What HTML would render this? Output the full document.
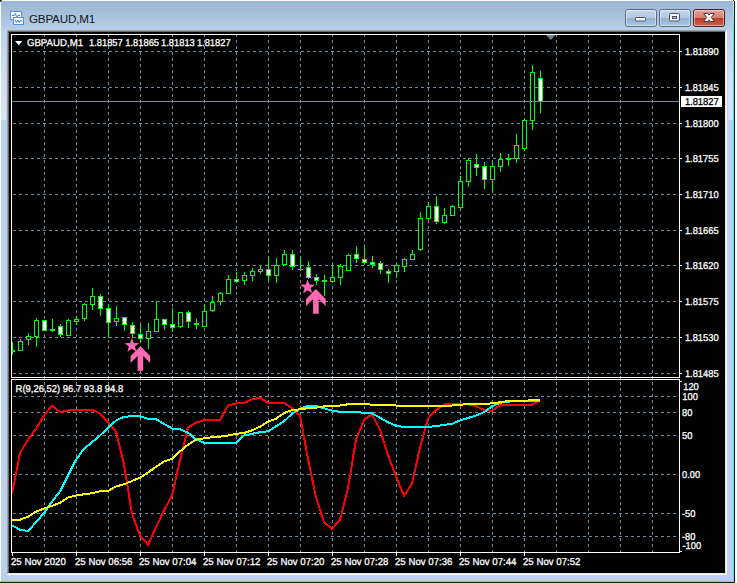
<!DOCTYPE html>
<html><head><meta charset="utf-8"><title>GBPAUD,M1</title>
<style>html,body{margin:0;padding:0;background:#fff;}body{width:737px;height:583px;overflow:hidden;}svg{display:block;}text{font-family:"Liberation Sans",Arial,sans-serif;}</style>
</head><body>
<svg width="737" height="583" viewBox="0 0 737 583">
<defs>
<linearGradient id="tb" x1="0" y1="0" x2="0" y2="1"><stop offset="0" stop-color="#99b4d1"/><stop offset="1" stop-color="#b9d1ea"/></linearGradient>
<linearGradient id="sideL" x1="0" y1="0" x2="0" y2="1"><stop offset="0" stop-color="#b9d1ea"/><stop offset="0.1" stop-color="#cfe0f2"/><stop offset="0.99" stop-color="#d3e3f4"/><stop offset="1" stop-color="#b9d1ea"/></linearGradient>
<linearGradient id="btn" x1="0" y1="0" x2="0" y2="1"><stop offset="0" stop-color="#c4d7ec"/><stop offset="0.48" stop-color="#b1c9e3"/><stop offset="0.5" stop-color="#94b0d1"/><stop offset="1" stop-color="#acc5e1"/></linearGradient>
<linearGradient id="cls" x1="0" y1="0" x2="0" y2="1"><stop offset="0" stop-color="#e6a598"/><stop offset="0.48" stop-color="#d67f6e"/><stop offset="0.5" stop-color="#b93a25"/><stop offset="1" stop-color="#cc6650"/></linearGradient>
<linearGradient id="strip" x1="0" y1="0" x2="0" y2="1"><stop offset="0" stop-color="#bdd4eb"/><stop offset="0.5" stop-color="#cfdff1"/><stop offset="1" stop-color="#d8e5f4"/></linearGradient>
<linearGradient id="cy" x1="0" y1="0" x2="0" y2="1"><stop offset="0" stop-color="#d0f2ff"/><stop offset="1" stop-color="#46dcff"/></linearGradient>
<clipPath id="cm"><rect x="12" y="35" width="667" height="342"/></clipPath>
<clipPath id="cs"><rect x="12" y="380" width="667" height="172"/></clipPath>
</defs>
<rect x="0" y="0" width="737" height="583" fill="#fff"/>
<g shape-rendering="crispEdges">
<rect x="0" y="0" width="735" height="583" fill="#b9d1ea"/>
<rect x="0" y="0" width="735" height="31" fill="url(#tb)"/>
<rect x="1" y="30" width="5" height="90" fill="url(#strip)"/>
<rect x="728" y="30" width="5" height="90" fill="url(#strip)"/>
<rect x="0" y="0" width="735" height="1" fill="#fff"/>
<rect x="0" y="0" width="1" height="581" fill="#fff"/>
<rect x="733" y="1" width="1" height="581" fill="#46dcff"/>
<rect x="733" y="1" width="1" height="30" fill="url(#cy)"/>
<rect x="0" y="581" width="734" height="1" fill="#46dcff"/>
<rect x="734" y="0" width="1" height="583" fill="#1c1c1c"/>
<rect x="0" y="582" width="735" height="1" fill="#1c1c1c"/>
<rect x="0" y="0" width="2" height="1" fill="#333"/><rect x="0" y="1" width="1" height="1" fill="#333"/>
<rect x="733" y="0" width="2" height="1" fill="#333"/><rect x="734" y="0" width="3" height="1" fill="#fff"/><rect x="735" y="0" width="2" height="583" fill="#fff"/>
<rect x="7" y="30" width="720" height="545" fill="#fff"/>
<rect x="7" y="30" width="719" height="544" fill="#a0a0a0"/>
<rect x="8" y="31" width="718" height="543" fill="#e3e3e3"/>
<rect x="8" y="31" width="717" height="542" fill="#696969"/>
<rect x="9" y="32" width="716" height="541" fill="#000"/>
</g>
<g shape-rendering="crispEdges">
<rect x="10" y="11" width="12" height="9" fill="#5b8cf0"/><rect x="11" y="12" width="10" height="7" fill="#fff"/>
<rect x="13" y="17" width="11" height="8" fill="#5b8cf0"/><rect x="14" y="18" width="9" height="6" fill="#fff"/>
</g>
<path d="M12 15.5h2.2l1-1.8 1.8 3.2 1-1.4h2" fill="none" stroke="#3f74ec" stroke-width="1"/>
<path d="M15 20l1.4 2.6 1.4-2.6 1.4 2.6 1.4-2.6 1 1.6" fill="none" stroke="#3f74ec" stroke-width="1"/>
<text x="28.9" y="22.6" font-size="11.7px" fill="#161616" letter-spacing="-0.2">GBPAUD,M1</text>
<rect x="625.5" y="9.5" width="31" height="17" rx="2.2" ry="2.2" fill="url(#btn)" stroke="#5a6b85" stroke-width="1"/>
<rect x="626.5" y="10.5" width="29" height="15" rx="1.5" ry="1.5" fill="none" stroke="#fff" stroke-opacity="0.45" stroke-width="1"/>
<rect x="659.5" y="9.5" width="31" height="17" rx="2.2" ry="2.2" fill="url(#btn)" stroke="#5a6b85" stroke-width="1"/>
<rect x="660.5" y="10.5" width="29" height="15" rx="1.5" ry="1.5" fill="none" stroke="#fff" stroke-opacity="0.45" stroke-width="1"/>
<rect x="693.5" y="9.5" width="31" height="17" rx="2.2" ry="2.2" fill="url(#cls)" stroke="#4a1c24" stroke-width="1"/>
<rect x="694.5" y="10.5" width="29" height="15" rx="1.5" ry="1.5" fill="none" stroke="#fff" stroke-opacity="0.45" stroke-width="1"/>
<rect x="635.5" y="17.5" width="10" height="3.5" rx="0.8" fill="#f4f6fa" stroke="#4b5468" stroke-width="1"/>
<rect x="669.5" y="13.5" width="10" height="7.5" rx="0.8" fill="#f4f6fa" stroke="#4b5468" stroke-width="1"/>
<rect x="672.5" y="16.5" width="4" height="2" fill="#9fb7d3" stroke="#4b5468" stroke-width="1"/>
<path d="M703.7 13.5 L707.9 13.5 L709 15.1 L710.1 13.5 L714.3 13.5 L711.3 17.4 L714.5 21.5 L710.2 21.5 L709 19.8 L707.8 21.5 L703.5 21.5 L706.7 17.4 Z" fill="#f6f6f6" stroke="#4a3b48" stroke-width="1" stroke-linejoin="round"/>
<g shape-rendering="crispEdges" stroke="#778899" stroke-width="1" stroke-dasharray="3 3" fill="none">
<line x1="13" y1="51.5" x2="679" y2="51.5"/>
<line x1="13" y1="87.5" x2="679" y2="87.5"/>
<line x1="13" y1="123.5" x2="679" y2="123.5"/>
<line x1="13" y1="158.5" x2="679" y2="158.5"/>
<line x1="13" y1="194.5" x2="679" y2="194.5"/>
<line x1="13" y1="230.5" x2="679" y2="230.5"/>
<line x1="13" y1="265.5" x2="679" y2="265.5"/>
<line x1="13" y1="301.5" x2="679" y2="301.5"/>
<line x1="13" y1="337.5" x2="679" y2="337.5"/>
<line x1="13" y1="373.5" x2="679" y2="373.5"/>
<line x1="13" y1="396.5" x2="679" y2="396.5"/>
<line x1="13" y1="412.5" x2="679" y2="412.5"/>
<line x1="13" y1="435.5" x2="679" y2="435.5"/>
<line x1="13" y1="474.5" x2="679" y2="474.5"/>
<line x1="13" y1="513.5" x2="679" y2="513.5"/>
<line x1="13" y1="536.5" x2="679" y2="536.5"/>
<line x1="44.5" y1="34" x2="44.5" y2="552"/>
<line x1="76.5" y1="34" x2="76.5" y2="552"/>
<line x1="108.5" y1="34" x2="108.5" y2="552"/>
<line x1="140.5" y1="34" x2="140.5" y2="552"/>
<line x1="172.5" y1="34" x2="172.5" y2="552"/>
<line x1="204.5" y1="34" x2="204.5" y2="552"/>
<line x1="236.5" y1="34" x2="236.5" y2="552"/>
<line x1="268.5" y1="34" x2="268.5" y2="552"/>
<line x1="300.5" y1="34" x2="300.5" y2="552"/>
<line x1="332.5" y1="34" x2="332.5" y2="552"/>
<line x1="364.5" y1="34" x2="364.5" y2="552"/>
<line x1="396.5" y1="34" x2="396.5" y2="552"/>
<line x1="428.5" y1="34" x2="428.5" y2="552"/>
<line x1="460.5" y1="34" x2="460.5" y2="552"/>
<line x1="492.5" y1="34" x2="492.5" y2="552"/>
<line x1="524.5" y1="34" x2="524.5" y2="552"/>
<line x1="556.5" y1="34" x2="556.5" y2="552"/>
<line x1="588.5" y1="34" x2="588.5" y2="552"/>
<line x1="620.5" y1="34" x2="620.5" y2="552"/>
<line x1="652.5" y1="34" x2="652.5" y2="552"/>
</g>
<g shape-rendering="crispEdges" clip-path="url(#cm)">
<rect x="12" y="342" width="1" height="13" fill="#00ff00"/>
<rect x="10" y="350" width="5" height="2" fill="#00ff00"/>
<rect x="20" y="339" width="1" height="12" fill="#00ff00"/>
<rect x="18" y="341" width="5" height="10" fill="#00ff00"/>
<rect x="19" y="342" width="3" height="8" fill="#000"/>
<rect x="28" y="333" width="1" height="12" fill="#00ff00"/>
<rect x="26" y="336" width="5" height="4" fill="#00ff00"/>
<rect x="27" y="337" width="3" height="2" fill="#000"/>
<rect x="36" y="318" width="1" height="29" fill="#00ff00"/>
<rect x="34" y="320" width="5" height="17" fill="#00ff00"/>
<rect x="35" y="321" width="3" height="15" fill="#000"/>
<rect x="44" y="320" width="1" height="11" fill="#00ff00"/>
<rect x="42" y="320" width="5" height="11" fill="#00ff00"/>
<rect x="43" y="321" width="3" height="9" fill="#fff"/>
<rect x="52" y="319" width="1" height="13" fill="#00ff00"/>
<rect x="50" y="329" width="5" height="2" fill="#00ff00"/>
<rect x="60" y="324" width="1" height="13" fill="#00ff00"/>
<rect x="58" y="326" width="5" height="9" fill="#00ff00"/>
<rect x="59" y="327" width="3" height="7" fill="#fff"/>
<rect x="68" y="319" width="1" height="17" fill="#00ff00"/>
<rect x="66" y="320" width="5" height="16" fill="#00ff00"/>
<rect x="67" y="321" width="3" height="14" fill="#000"/>
<rect x="76" y="316" width="1" height="9" fill="#00ff00"/>
<rect x="74" y="319" width="5" height="3" fill="#00ff00"/>
<rect x="75" y="320" width="3" height="1" fill="#000"/>
<rect x="84" y="303" width="1" height="18" fill="#00ff00"/>
<rect x="82" y="304" width="5" height="15" fill="#00ff00"/>
<rect x="83" y="305" width="3" height="13" fill="#000"/>
<rect x="92" y="288" width="1" height="22" fill="#00ff00"/>
<rect x="90" y="296" width="5" height="9" fill="#00ff00"/>
<rect x="91" y="297" width="3" height="7" fill="#000"/>
<rect x="100" y="294" width="1" height="22" fill="#00ff00"/>
<rect x="98" y="296" width="5" height="13" fill="#00ff00"/>
<rect x="99" y="297" width="3" height="11" fill="#fff"/>
<rect x="108" y="304" width="1" height="34" fill="#00ff00"/>
<rect x="106" y="308" width="5" height="15" fill="#00ff00"/>
<rect x="107" y="309" width="3" height="13" fill="#fff"/>
<rect x="116" y="306" width="1" height="20" fill="#00ff00"/>
<rect x="114" y="318" width="5" height="4" fill="#00ff00"/>
<rect x="115" y="319" width="3" height="2" fill="#000"/>
<rect x="124" y="317" width="1" height="14" fill="#00ff00"/>
<rect x="122" y="317" width="5" height="8" fill="#00ff00"/>
<rect x="123" y="318" width="3" height="6" fill="#fff"/>
<rect x="132" y="322" width="1" height="16" fill="#00ff00"/>
<rect x="130" y="325" width="5" height="9" fill="#00ff00"/>
<rect x="131" y="326" width="3" height="7" fill="#fff"/>
<rect x="140" y="325" width="1" height="18" fill="#00ff00"/>
<rect x="138" y="334" width="5" height="5" fill="#00ff00"/>
<rect x="139" y="335" width="3" height="3" fill="#fff"/>
<rect x="148" y="323" width="1" height="26" fill="#00ff00"/>
<rect x="146" y="331" width="5" height="8" fill="#00ff00"/>
<rect x="147" y="332" width="3" height="6" fill="#000"/>
<rect x="156" y="301" width="1" height="31" fill="#00ff00"/>
<rect x="154" y="319" width="5" height="13" fill="#00ff00"/>
<rect x="155" y="320" width="3" height="11" fill="#000"/>
<rect x="164" y="319" width="1" height="11" fill="#00ff00"/>
<rect x="162" y="319" width="5" height="6" fill="#00ff00"/>
<rect x="163" y="320" width="3" height="4" fill="#fff"/>
<rect x="172" y="308" width="1" height="24" fill="#00ff00"/>
<rect x="170" y="324" width="5" height="4" fill="#00ff00"/>
<rect x="171" y="325" width="3" height="2" fill="#fff"/>
<rect x="180" y="312" width="1" height="16" fill="#00ff00"/>
<rect x="178" y="312" width="5" height="15" fill="#00ff00"/>
<rect x="179" y="313" width="3" height="13" fill="#000"/>
<rect x="188" y="311" width="1" height="17" fill="#00ff00"/>
<rect x="186" y="312" width="5" height="10" fill="#00ff00"/>
<rect x="187" y="313" width="3" height="8" fill="#fff"/>
<rect x="196" y="319" width="1" height="10" fill="#00ff00"/>
<rect x="194" y="323" width="5" height="2" fill="#00ff00"/>
<rect x="204" y="304" width="1" height="23" fill="#00ff00"/>
<rect x="202" y="311" width="5" height="16" fill="#00ff00"/>
<rect x="203" y="312" width="3" height="14" fill="#000"/>
<rect x="212" y="296" width="1" height="16" fill="#00ff00"/>
<rect x="210" y="302" width="5" height="9" fill="#00ff00"/>
<rect x="211" y="303" width="3" height="7" fill="#000"/>
<rect x="220" y="292" width="1" height="13" fill="#00ff00"/>
<rect x="218" y="293" width="5" height="9" fill="#00ff00"/>
<rect x="219" y="294" width="3" height="7" fill="#000"/>
<rect x="228" y="275" width="1" height="19" fill="#00ff00"/>
<rect x="226" y="279" width="5" height="15" fill="#00ff00"/>
<rect x="227" y="280" width="3" height="13" fill="#000"/>
<rect x="236" y="272" width="1" height="11" fill="#00ff00"/>
<rect x="234" y="279" width="5" height="3" fill="#00ff00"/>
<rect x="235" y="280" width="3" height="1" fill="#fff"/>
<rect x="244" y="272" width="1" height="13" fill="#00ff00"/>
<rect x="242" y="275" width="5" height="6" fill="#00ff00"/>
<rect x="243" y="276" width="3" height="4" fill="#000"/>
<rect x="252" y="268" width="1" height="13" fill="#00ff00"/>
<rect x="250" y="271" width="5" height="5" fill="#00ff00"/>
<rect x="251" y="272" width="3" height="3" fill="#000"/>
<rect x="260" y="266" width="1" height="8" fill="#00ff00"/>
<rect x="258" y="269" width="5" height="3" fill="#00ff00"/>
<rect x="259" y="270" width="3" height="1" fill="#000"/>
<rect x="268" y="257" width="1" height="24" fill="#00ff00"/>
<rect x="266" y="269" width="5" height="7" fill="#00ff00"/>
<rect x="267" y="270" width="3" height="5" fill="#fff"/>
<rect x="276" y="258" width="1" height="25" fill="#00ff00"/>
<rect x="274" y="265" width="5" height="11" fill="#00ff00"/>
<rect x="275" y="266" width="3" height="9" fill="#000"/>
<rect x="284" y="250" width="1" height="15" fill="#00ff00"/>
<rect x="282" y="254" width="5" height="11" fill="#00ff00"/>
<rect x="283" y="255" width="3" height="9" fill="#000"/>
<rect x="292" y="250" width="1" height="20" fill="#00ff00"/>
<rect x="290" y="254" width="5" height="13" fill="#00ff00"/>
<rect x="291" y="255" width="3" height="11" fill="#fff"/>
<rect x="300" y="257" width="1" height="14" fill="#00ff00"/>
<rect x="298" y="269" width="5" height="1" fill="#00ff00"/>
<rect x="308" y="261" width="1" height="18" fill="#00ff00"/>
<rect x="306" y="267" width="5" height="11" fill="#00ff00"/>
<rect x="307" y="268" width="3" height="9" fill="#fff"/>
<rect x="316" y="274" width="1" height="11" fill="#00ff00"/>
<rect x="314" y="277" width="5" height="4" fill="#00ff00"/>
<rect x="315" y="278" width="3" height="2" fill="#fff"/>
<rect x="324" y="275" width="1" height="21" fill="#00ff00"/>
<rect x="322" y="280" width="5" height="2" fill="#00ff00"/>
<rect x="332" y="265" width="1" height="18" fill="#00ff00"/>
<rect x="330" y="277" width="5" height="5" fill="#00ff00"/>
<rect x="331" y="278" width="3" height="3" fill="#000"/>
<rect x="340" y="264" width="1" height="21" fill="#00ff00"/>
<rect x="338" y="266" width="5" height="12" fill="#00ff00"/>
<rect x="339" y="267" width="3" height="10" fill="#000"/>
<rect x="348" y="254" width="1" height="17" fill="#00ff00"/>
<rect x="346" y="255" width="5" height="16" fill="#00ff00"/>
<rect x="347" y="256" width="3" height="14" fill="#000"/>
<rect x="356" y="246" width="1" height="17" fill="#00ff00"/>
<rect x="354" y="254" width="5" height="5" fill="#00ff00"/>
<rect x="355" y="255" width="3" height="3" fill="#fff"/>
<rect x="364" y="246" width="1" height="17" fill="#00ff00"/>
<rect x="362" y="259" width="5" height="4" fill="#00ff00"/>
<rect x="363" y="260" width="3" height="2" fill="#fff"/>
<rect x="372" y="256" width="1" height="12" fill="#00ff00"/>
<rect x="370" y="262" width="5" height="3" fill="#00ff00"/>
<rect x="371" y="263" width="3" height="1" fill="#fff"/>
<rect x="380" y="261" width="1" height="13" fill="#00ff00"/>
<rect x="378" y="263" width="5" height="7" fill="#00ff00"/>
<rect x="379" y="264" width="3" height="5" fill="#fff"/>
<rect x="388" y="269" width="1" height="14" fill="#00ff00"/>
<rect x="386" y="271" width="5" height="3" fill="#00ff00"/>
<rect x="387" y="272" width="3" height="1" fill="#fff"/>
<rect x="396" y="264" width="1" height="14" fill="#00ff00"/>
<rect x="394" y="265" width="5" height="7" fill="#00ff00"/>
<rect x="395" y="266" width="3" height="5" fill="#000"/>
<rect x="404" y="258" width="1" height="14" fill="#00ff00"/>
<rect x="402" y="259" width="5" height="8" fill="#00ff00"/>
<rect x="403" y="260" width="3" height="6" fill="#000"/>
<rect x="412" y="250" width="1" height="10" fill="#00ff00"/>
<rect x="410" y="254" width="5" height="6" fill="#00ff00"/>
<rect x="411" y="255" width="3" height="4" fill="#000"/>
<rect x="420" y="212" width="1" height="39" fill="#00ff00"/>
<rect x="418" y="218" width="5" height="32" fill="#00ff00"/>
<rect x="419" y="219" width="3" height="30" fill="#000"/>
<rect x="428" y="202" width="1" height="18" fill="#00ff00"/>
<rect x="426" y="206" width="5" height="13" fill="#00ff00"/>
<rect x="427" y="207" width="3" height="11" fill="#000"/>
<rect x="436" y="196" width="1" height="28" fill="#00ff00"/>
<rect x="434" y="206" width="5" height="16" fill="#00ff00"/>
<rect x="435" y="207" width="3" height="14" fill="#fff"/>
<rect x="444" y="208" width="1" height="16" fill="#00ff00"/>
<rect x="442" y="215" width="5" height="8" fill="#00ff00"/>
<rect x="443" y="216" width="3" height="6" fill="#000"/>
<rect x="452" y="205" width="1" height="11" fill="#00ff00"/>
<rect x="450" y="206" width="5" height="10" fill="#00ff00"/>
<rect x="451" y="207" width="3" height="8" fill="#000"/>
<rect x="460" y="176" width="1" height="33" fill="#00ff00"/>
<rect x="458" y="181" width="5" height="27" fill="#00ff00"/>
<rect x="459" y="182" width="3" height="25" fill="#000"/>
<rect x="468" y="158" width="1" height="29" fill="#00ff00"/>
<rect x="466" y="160" width="5" height="22" fill="#00ff00"/>
<rect x="467" y="161" width="3" height="20" fill="#000"/>
<rect x="476" y="154" width="1" height="22" fill="#00ff00"/>
<rect x="474" y="164" width="5" height="4" fill="#00ff00"/>
<rect x="475" y="165" width="3" height="2" fill="#fff"/>
<rect x="484" y="162" width="1" height="27" fill="#00ff00"/>
<rect x="482" y="166" width="5" height="14" fill="#00ff00"/>
<rect x="483" y="167" width="3" height="12" fill="#fff"/>
<rect x="492" y="162" width="1" height="31" fill="#00ff00"/>
<rect x="490" y="166" width="5" height="14" fill="#00ff00"/>
<rect x="491" y="167" width="3" height="12" fill="#000"/>
<rect x="500" y="153" width="1" height="19" fill="#00ff00"/>
<rect x="498" y="159" width="5" height="8" fill="#00ff00"/>
<rect x="499" y="160" width="3" height="6" fill="#000"/>
<rect x="508" y="154" width="1" height="12" fill="#00ff00"/>
<rect x="506" y="158" width="5" height="2" fill="#00ff00"/>
<rect x="516" y="134" width="1" height="29" fill="#00ff00"/>
<rect x="514" y="145" width="5" height="14" fill="#00ff00"/>
<rect x="515" y="146" width="3" height="12" fill="#000"/>
<rect x="524" y="118" width="1" height="33" fill="#00ff00"/>
<rect x="522" y="120" width="5" height="29" fill="#00ff00"/>
<rect x="523" y="121" width="3" height="27" fill="#000"/>
<rect x="532" y="65" width="1" height="65" fill="#00ff00"/>
<rect x="530" y="72" width="5" height="49" fill="#00ff00"/>
<rect x="531" y="73" width="3" height="47" fill="#000"/>
<rect x="540" y="71" width="1" height="42" fill="#00ff00"/>
<rect x="538" y="78" width="5" height="24" fill="#00ff00"/>
<rect x="539" y="79" width="3" height="22" fill="#fff"/>
</g>
<polygon points="131.90,337.90 133.78,343.01 139.22,343.22 134.94,346.59 136.43,351.83 131.90,348.80 127.37,351.83 128.86,346.59 124.58,343.22 130.02,343.01" fill="#ff69b4"/>
<polygon points="307.60,279.40 309.48,284.51 314.92,284.72 310.64,288.09 312.13,293.33 307.60,290.30 303.07,293.33 304.56,288.09 300.28,284.72 305.72,284.51" fill="#ff69b4"/>
<polygon points="140.4,346.2 150.2,356.0 150.2,363.1 143.2,356.1 143.2,370.8 137.6,370.8 137.6,356.1 130.6,363.1 130.6,356.0" fill="#ff69b4"/>
<polygon points="315.9,289.1 325.7,298.9 325.7,306.0 318.7,299.0 318.7,313.7 313.1,313.7 313.1,299.0 306.1,306.0 306.1,298.9" fill="#ff69b4"/>
<rect x="12" y="101" width="667" height="1" fill="#778899" shape-rendering="crispEdges"/>
<polyline points="12,493.8 20,453 28,439.7 36,428.8 44,415.5 52,405.5 60,412.2 68,410.5 76,409.7 84,409.7 92,409.7 100,413.5 108,422.2 116,431.5 124,464.5 132,513.8 140,535.5 148,544.7 156,527.2 164,510.5 172,495.5 180,460.5 188,427.5 196,422.7 204,420.2 212,420 220,420 228,405.5 236,403.5 244,403 252,399.5 260,397.7 268,403 276,403 284,403 292,408 300,415.5 308,459 316,497.2 324,522.2 332,528.8 340,519.7 348,488 356,439.5 364,419.7 372,414.3 380,429.7 388,455 396,476.3 404,496 412,483.5 420,447.5 428,418.5 436,410.2 444,404.7 452,403.5 460,403.5 468,404.3 476,406.3 484,409.7 492,411 500,404.9 508,404.8 516,404.8 524,404.8 532,404.8 540,400" fill="none" stroke="#ff0000" stroke-width="2" stroke-linejoin="round" shape-rendering="crispEdges" clip-path="url(#cs)"/>
<polyline points="12,525.5 20,529.7 28,531 36,522.2 44,513 52,501.7 60,491.3 68,475.5 76,459.7 84,448.8 92,442.2 100,435.5 108,428 116,420.5 124,416.7 132,416.3 140,416.3 148,418.8 156,419.2 164,423.8 172,428.5 180,429.2 188,432.7 196,439.3 204,442.7 212,443 220,443 228,443 236,443 244,435.5 252,433.8 260,432.2 268,431.3 276,426.3 284,421.3 292,413.8 300,408.8 308,406 316,406 324,408.3 332,410.5 340,411.8 348,411.8 356,411.8 364,413 372,413.3 380,417.7 388,422.2 396,425.8 404,427 412,427 420,427 428,427 436,426 444,425 452,423.8 460,420.5 468,418 476,415.5 484,412.2 492,406.3 500,402.8 508,401.6 516,401.2 524,401.2 532,401 540,401.3" fill="none" stroke="#00ffff" stroke-width="2" stroke-linejoin="round" shape-rendering="crispEdges" clip-path="url(#cs)"/>
<polyline points="12,520.2 20,519.7 28,516.7 36,511.7 44,508.5 52,505.8 60,502.7 68,497.5 76,495.5 84,494.3 92,493.3 100,491.3 108,491 116,486.5 124,484.2 132,481 140,477.7 148,472.5 156,466.8 164,461.5 172,458.8 180,451.3 188,444.7 196,439.7 204,438.3 212,437.3 220,436.7 228,435.5 236,433.8 244,433 252,430.3 260,426.7 268,421.7 276,418.8 284,413 292,410.2 300,409.2 308,408.3 316,407.7 324,406.3 332,406 340,405.5 348,404.3 356,404 364,403.9 372,404.7 380,405 388,405 396,405.5 404,405.8 412,405.8 420,405.8 428,405.8 436,405.8 444,405.8 452,405.5 460,404.7 468,404.2 476,404.2 484,404.2 492,403.3 500,402.3 508,401 516,400.7 524,400.7 532,400.3 540,399.7" fill="none" stroke="#ffff00" stroke-width="2" stroke-linejoin="round" shape-rendering="crispEdges" clip-path="url(#cs)"/>
<g shape-rendering="crispEdges" fill="#fff">
<rect x="11" y="34" width="669" height="1"/><rect x="11" y="377" width="669" height="1"/>
<rect x="11" y="34" width="1" height="344"/><rect x="679" y="34" width="1" height="344"/>
<rect x="11" y="379" width="669" height="1"/><rect x="11" y="552" width="669" height="1"/>
<rect x="11" y="379" width="1" height="174"/><rect x="679" y="379" width="1" height="174"/>
<rect x="680" y="51" width="2" height="1"/>
<rect x="680" y="87" width="2" height="1"/>
<rect x="680" y="123" width="2" height="1"/>
<rect x="680" y="158" width="2" height="1"/>
<rect x="680" y="194" width="2" height="1"/>
<rect x="680" y="230" width="2" height="1"/>
<rect x="680" y="265" width="2" height="1"/>
<rect x="680" y="301" width="2" height="1"/>
<rect x="680" y="337" width="2" height="1"/>
<rect x="680" y="373" width="2" height="1"/>
<rect x="680" y="381" width="2" height="1"/><rect x="680" y="551" width="2" height="1"/>
<rect x="12" y="553" width="1" height="3"/>
<rect x="76" y="553" width="1" height="3"/>
<rect x="140" y="553" width="1" height="3"/>
<rect x="204" y="553" width="1" height="3"/>
<rect x="268" y="553" width="1" height="3"/>
<rect x="332" y="553" width="1" height="3"/>
<rect x="396" y="553" width="1" height="3"/>
<rect x="460" y="553" width="1" height="3"/>
<rect x="524" y="553" width="1" height="3"/>
<rect x="681" y="96" width="41" height="11"/>
</g>
<polygon points="546,35 555.5,35 550.7,40" fill="#708090"/>
<polygon points="15,41 22.5,41 18.75,45.2" fill="#fff"/>
<text transform="translate(26.9,46) rotate(0.03) scale(0.966,1)" font-size="10px" fill="#fff" stroke="#fff" stroke-width="0.3" xml:space="preserve">GBPAUD,M1</text>
<text transform="translate(89,46) rotate(0.03) scale(0.934,1)" font-size="10px" fill="#fff" stroke="#fff" stroke-width="0.3" xml:space="preserve">1.81857</text>
<text transform="translate(125.3,46) rotate(0.03) scale(0.934,1)" font-size="10px" fill="#fff" stroke="#fff" stroke-width="0.3" xml:space="preserve">1.81865</text>
<text transform="translate(161.1,46) rotate(0.03) scale(0.934,1)" font-size="10px" fill="#fff" stroke="#fff" stroke-width="0.3" xml:space="preserve">1.81813</text>
<text transform="translate(196.9,46) rotate(0.03) scale(0.934,1)" font-size="10px" fill="#fff" stroke="#fff" stroke-width="0.3" xml:space="preserve">1.81827</text>
<text transform="translate(15.6,392) rotate(0.03) scale(0.945,1)" font-size="10px" fill="#fff" stroke="#fff" stroke-width="0.3" xml:space="preserve">R(9,26,52) 96.7 93.8 94.8</text>
<text transform="translate(684.9,55) rotate(0.03) scale(0.934,1)" font-size="10px" fill="#fff" stroke="#fff" stroke-width="0.3" xml:space="preserve">1.81890</text>
<text transform="translate(684.9,91) rotate(0.03) scale(0.934,1)" font-size="10px" fill="#fff" stroke="#fff" stroke-width="0.3" xml:space="preserve">1.81845</text>
<text transform="translate(684.9,127) rotate(0.03) scale(0.934,1)" font-size="10px" fill="#fff" stroke="#fff" stroke-width="0.3" xml:space="preserve">1.81800</text>
<text transform="translate(684.9,162) rotate(0.03) scale(0.934,1)" font-size="10px" fill="#fff" stroke="#fff" stroke-width="0.3" xml:space="preserve">1.81755</text>
<text transform="translate(684.9,198) rotate(0.03) scale(0.934,1)" font-size="10px" fill="#fff" stroke="#fff" stroke-width="0.3" xml:space="preserve">1.81710</text>
<text transform="translate(684.9,234) rotate(0.03) scale(0.934,1)" font-size="10px" fill="#fff" stroke="#fff" stroke-width="0.3" xml:space="preserve">1.81665</text>
<text transform="translate(684.9,269) rotate(0.03) scale(0.934,1)" font-size="10px" fill="#fff" stroke="#fff" stroke-width="0.3" xml:space="preserve">1.81620</text>
<text transform="translate(684.9,305) rotate(0.03) scale(0.934,1)" font-size="10px" fill="#fff" stroke="#fff" stroke-width="0.3" xml:space="preserve">1.81575</text>
<text transform="translate(684.9,341) rotate(0.03) scale(0.934,1)" font-size="10px" fill="#fff" stroke="#fff" stroke-width="0.3" xml:space="preserve">1.81530</text>
<text transform="translate(684.9,377) rotate(0.03) scale(0.934,1)" font-size="10px" fill="#fff" stroke="#fff" stroke-width="0.3" xml:space="preserve">1.81485</text>
<text transform="translate(684.9,105) rotate(0.03) scale(0.934,1)" font-size="10px" fill="#000" stroke="#000" stroke-width="0.3" xml:space="preserve">1.81827</text>
<text transform="translate(683.2,390) rotate(0.03) scale(0.934,1)" font-size="10px" fill="#fff" stroke="#fff" stroke-width="0.3" xml:space="preserve">120</text>
<text transform="translate(682.3,400) rotate(0.03) scale(0.934,1)" font-size="10px" fill="#fff" stroke="#fff" stroke-width="0.3" xml:space="preserve">100</text>
<text transform="translate(682,416) rotate(0.03) scale(0.934,1)" font-size="10px" fill="#fff" stroke="#fff" stroke-width="0.3" xml:space="preserve">80</text>
<text transform="translate(682,439) rotate(0.03) scale(0.934,1)" font-size="10px" fill="#fff" stroke="#fff" stroke-width="0.3" xml:space="preserve">50</text>
<text transform="translate(682,478) rotate(0.03) scale(0.934,1)" font-size="10px" fill="#fff" stroke="#fff" stroke-width="0.3" xml:space="preserve">0.00</text>
<text transform="translate(682,517) rotate(0.03) scale(0.934,1)" font-size="10px" fill="#fff" stroke="#fff" stroke-width="0.3" xml:space="preserve">-50</text>
<text transform="translate(682,540) rotate(0.03) scale(0.934,1)" font-size="10px" fill="#fff" stroke="#fff" stroke-width="0.3" xml:space="preserve">-80</text>
<text transform="translate(682.5,549) rotate(0.03) scale(0.934,1)" font-size="10px" fill="#fff" stroke="#fff" stroke-width="0.3" xml:space="preserve">-100</text>
<text transform="translate(11,565) rotate(0.03) scale(0.966,1)" font-size="10px" fill="#fff" stroke="#fff" stroke-width="0.3" xml:space="preserve">25 Nov 2020</text>
<text transform="translate(75,565) rotate(0.03) scale(0.966,1)" font-size="10px" fill="#fff" stroke="#fff" stroke-width="0.3" xml:space="preserve">25 Nov 06:56</text>
<text transform="translate(139,565) rotate(0.03) scale(0.966,1)" font-size="10px" fill="#fff" stroke="#fff" stroke-width="0.3" xml:space="preserve">25 Nov 07:04</text>
<text transform="translate(203,565) rotate(0.03) scale(0.966,1)" font-size="10px" fill="#fff" stroke="#fff" stroke-width="0.3" xml:space="preserve">25 Nov 07:12</text>
<text transform="translate(267,565) rotate(0.03) scale(0.966,1)" font-size="10px" fill="#fff" stroke="#fff" stroke-width="0.3" xml:space="preserve">25 Nov 07:20</text>
<text transform="translate(331,565) rotate(0.03) scale(0.966,1)" font-size="10px" fill="#fff" stroke="#fff" stroke-width="0.3" xml:space="preserve">25 Nov 07:28</text>
<text transform="translate(395,565) rotate(0.03) scale(0.966,1)" font-size="10px" fill="#fff" stroke="#fff" stroke-width="0.3" xml:space="preserve">25 Nov 07:36</text>
<text transform="translate(459,565) rotate(0.03) scale(0.966,1)" font-size="10px" fill="#fff" stroke="#fff" stroke-width="0.3" xml:space="preserve">25 Nov 07:44</text>
<text transform="translate(523,565) rotate(0.03) scale(0.966,1)" font-size="10px" fill="#fff" stroke="#fff" stroke-width="0.3" xml:space="preserve">25 Nov 07:52</text>
</svg></body></html>
